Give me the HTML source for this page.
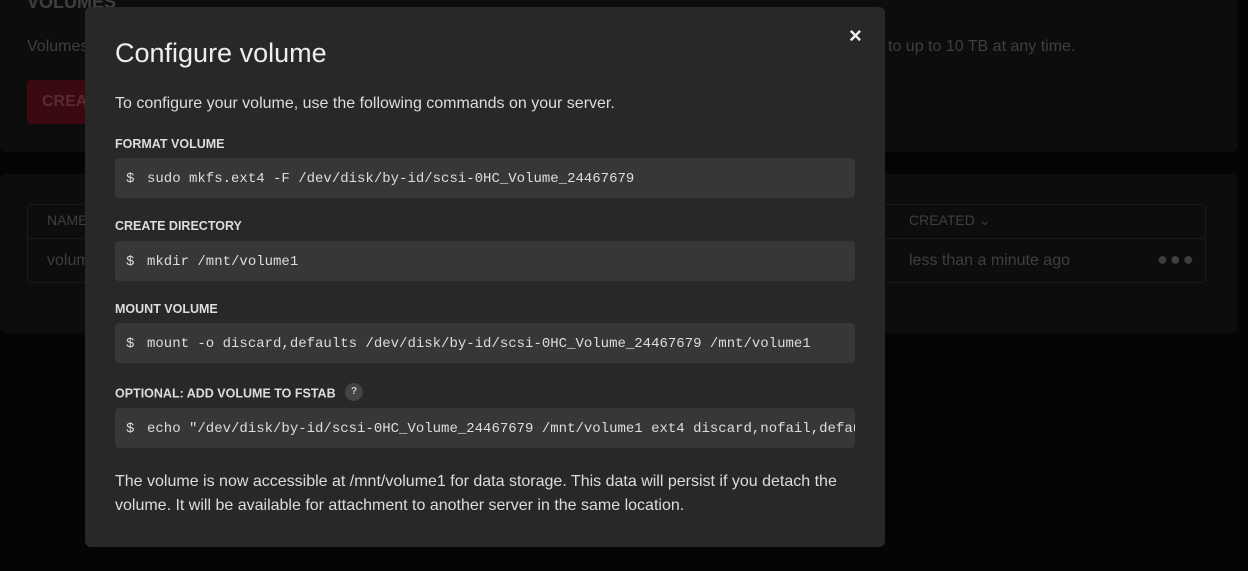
<!DOCTYPE html>
<html><head><style>
body{margin:0;width:1248px;height:571px;background:#050505;font-family:"Liberation Sans",sans-serif;overflow:hidden;position:relative}
.p1{position:absolute;left:0;top:-20px;width:1238px;height:172px;background:#0d0d0d;border-radius:6px}
.p2{position:absolute;left:0;top:174px;width:1238px;height:159px;background:#0d0d0d;border-radius:6px}
.bg{position:absolute;color:#3f3f3f;font-size:16px}
.modal{position:absolute;left:85px;top:7px;width:800px;height:540px;background:#282828;border-radius:6px}
h1{position:absolute;left:30px;top:31px;margin:0;font-weight:normal;font-size:27px;color:#eee}
.t{position:absolute;left:30px;color:#ddd;font-size:16px}
.l{position:absolute;left:30px;color:#ddd;font-size:12.5px;font-weight:bold}
.c{position:absolute;left:30px;width:740px;height:40px;background:#373737;border-radius:4px;color:#ddd;font-family:"Liberation Mono",monospace;font-size:14px;line-height:42px;white-space:nowrap;overflow:hidden;box-sizing:border-box;padding-left:11px}
.c b{display:inline-block;width:21px;font-weight:normal}
</style></head><body>
<div class="p1"></div><div class="p2"></div>
<div class="bg" style="left:27px;top:-8px;font-weight:bold;font-size:18px">VOLUMES</div>
<div class="bg" style="left:27px;top:38px">Volumes</div>
<div class="bg" style="left:888px;top:38px">to up to 10 TB at any time.</div>
<div style="position:absolute;left:27px;top:80px;width:80px;height:44px;background:#3a0a10;border-radius:4px;color:#5a2a30;font-weight:bold;font-size:16px;line-height:44px;padding-left:15px;box-sizing:border-box">CREA</div>
<div style="position:absolute;left:27px;top:204px;width:1179px;height:79px;border:1px solid #1a1a1a;border-radius:4px;box-sizing:border-box"><div style="position:absolute;left:0;right:0;top:33px;border-top:1px solid #1a1a1a"></div></div>
<div class="bg" style="left:47px;top:212px;font-size:14px">NAME</div>
<div class="bg" style="left:47px;top:252px">volum</div>
<div class="bg" style="left:909px;top:212px;font-size:14px">CREATED ⌄</div>
<div class="bg" style="left:909px;top:252px">less than a minute ago</div>
<div class="bg" style="left:1157px;top:249px;font-size:18px;letter-spacing:2px">●●●</div>
<div class="modal">
<h1>Configure volume</h1>
<div style="position:absolute;left:764px;top:16px;color:#eee;font-size:22px;font-weight:bold">×</div>
<div class="t" style="top:88px">To configure your volume, use the following commands on your server.</div>
<div class="l" style="top:130px">FORMAT VOLUME</div>
<div class="c" style="top:151px"><b>$</b>sudo mkfs.ext4 -F /dev/disk/by-id/scsi-0HC_Volume_24467679</div>
<div class="l" style="top:212px">CREATE DIRECTORY</div>
<div class="c" style="top:234px"><b>$</b>mkdir /mnt/volume1</div>
<div class="l" style="top:295px">MOUNT VOLUME</div>
<div class="c" style="top:316px"><b>$</b>mount -o discard,defaults /dev/disk/by-id/scsi-0HC_Volume_24467679 /mnt/volume1</div>
<div class="l" style="top:378px">OPTIONAL: ADD VOLUME TO FSTAB <span style="display:inline-block;width:18px;height:18px;border-radius:9px;background:#444;color:#ccc;font-size:10px;text-align:center;line-height:18px;margin-left:6px;vertical-align:middle;position:relative;top:-2px">?</span></div>
<div class="c" style="top:401px"><b>$</b>echo "/dev/disk/by-id/scsi-0HC_Volume_24467679 /mnt/volume1 ext4 discard,nofail,defaults 0 0" &gt;&gt; /etc/fstab</div>
<div class="t" style="top:463px;line-height:24px;width:740px">The volume is now accessible at /mnt/volume1 for data storage. This data will persist if you detach the volume. It will be available for attachment to another server in the same location.</div>
</div>
</body></html>
